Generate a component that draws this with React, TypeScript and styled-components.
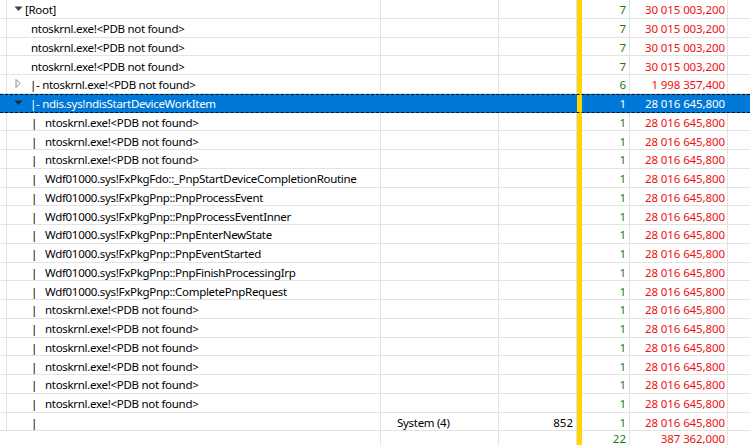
import React from 'react';
import styled, { createGlobalStyle, css } from 'styled-components';

const GlobalStyle = createGlobalStyle`
  html, body {
    margin: 0;
    padding: 0;
    background: #fff;
    overflow: hidden;
  }
  body {
    font-family: 'Noto Sans', 'Open Sans', sans-serif;
    font-size: 11.5px;
    color: #000;
  }
`;

const ROW_H = 18.75;
const COLS = '7px 374px 118px 78px 5px 48px 98px 1fr';
const GRID = '#e3e3e3';

type Expander = 'open' | 'closed' | undefined;

interface RowData {
  indent: number;
  expander?: Expander;
  pipe?: boolean;
  text: string;
  process?: string;
  pid?: string;
  count: string;
  weight: string;
  selected?: boolean;
}

const NT = 'ntoskrnl.exe!<PDB not found>';
const W = '28 016 645,800';

const rows: RowData[] = [
  { indent: 0, expander: 'open', text: '[Root]', count: '7', weight: '30 015 003,200' },
  { indent: 6, text: NT, count: '7', weight: '30 015 003,200' },
  { indent: 6, text: NT, count: '7', weight: '30 015 003,200' },
  { indent: 6, text: NT, count: '7', weight: '30 015 003,200' },
  { indent: 5, expander: 'closed', text: '|- ' + NT, count: '6', weight: '1 998 357,400' },
  { indent: 5, expander: 'open', text: '|- ndis.sys!ndisStartDeviceWorkItem', count: '1', weight: W, selected: true },
  { indent: 6, pipe: true, text: NT, count: '1', weight: W },
  { indent: 6, pipe: true, text: NT, count: '1', weight: W },
  { indent: 6, pipe: true, text: NT, count: '1', weight: W },
  { indent: 6, pipe: true, text: 'Wdf01000.sys!FxPkgFdo::_PnpStartDeviceCompletionRoutine', count: '1', weight: W },
  { indent: 6, pipe: true, text: 'Wdf01000.sys!FxPkgPnp::PnpProcessEvent', count: '1', weight: W },
  { indent: 6, pipe: true, text: 'Wdf01000.sys!FxPkgPnp::PnpProcessEventInner', count: '1', weight: W },
  { indent: 6, pipe: true, text: 'Wdf01000.sys!FxPkgPnp::PnpEnterNewState', count: '1', weight: W },
  { indent: 6, pipe: true, text: 'Wdf01000.sys!FxPkgPnp::PnpEventStarted', count: '1', weight: W },
  { indent: 6, pipe: true, text: 'Wdf01000.sys!FxPkgPnp::PnpFinishProcessingIrp', count: '1', weight: W },
  { indent: 6, pipe: true, text: 'Wdf01000.sys!FxPkgPnp::CompletePnpRequest', count: '1', weight: W },
  { indent: 6, pipe: true, text: NT, count: '1', weight: W },
  { indent: 6, pipe: true, text: NT, count: '1', weight: W },
  { indent: 6, pipe: true, text: NT, count: '1', weight: W },
  { indent: 6, pipe: true, text: NT, count: '1', weight: W },
  { indent: 6, pipe: true, text: NT, count: '1', weight: W },
  { indent: 6, pipe: true, text: NT, count: '1', weight: W },
  { indent: 6, pipe: true, text: '', process: 'System (4)', pid: '852', count: '1', weight: W },
];

const Table = styled.div`
  width: 750px;
  height: 445px;
  overflow: hidden;
`;

const Row = styled.div<{ $selected?: boolean; $height?: number }>`
  display: grid;
  grid-template-columns: ${COLS};
  height: ${({ $height }) => $height ?? ROW_H}px;
  position: relative;
  ${({ $selected }) =>
    $selected &&
    css`
      background: #0078d7;
      color: #fff;
      &::before,
      &::after {
        content: '';
        position: absolute;
        left: 0;
        right: 0;
        border-top: 1px dashed #111;
        z-index: 2;
      }
      &::before { top: 0; }
      &::after { bottom: 0; }
    `}
`;

const Cell = styled.div<{ $align?: 'left' | 'right'; $selected?: boolean; $last?: boolean; $noLine?: boolean; $pad?: number }>`
  display: flex;
  align-items: center;
  justify-content: ${({ $align }) => ($align === 'right' ? 'flex-end' : 'flex-start')};
  padding: ${({ $last }) => ($last ? '0' : '2px')} ${({ $align, $pad }) => ($align === 'right' ? `${$pad ?? 3}px` : '0')} 0
    ${({ $align, $pad }) => ($align === 'right' ? '0' : `${$pad ?? 0}px`)};
  white-space: nowrap;
  overflow: hidden;
  box-sizing: border-box;
  min-height: 0;
  border-right: 1px solid ${({ $selected, $noLine }) => ($selected || $noLine ? 'transparent' : GRID)};
  border-bottom: 1px solid ${({ $selected, $last }) => ($selected || $last ? 'transparent' : GRID)};
`;

const YellowBar = styled.div`
  background: #ffd400;
`;

const TreeIndent = styled.span<{ $w: number }>`
  display: inline-block;
  flex: 0 0 ${({ $w }) => $w}px;
`;

const ExpanderBox = styled.span`
  display: inline-flex;
  align-items: center;
  justify-content: center;
  flex: 0 0 14px;
  margin-top: -2px;
`;

const Pipe = styled.span`
  display: inline-block;
  flex: 0 0 14px;
`;

const Label = styled.span`
  letter-spacing: -0.3px;
`;

const Count = styled.span<{ $selected?: boolean }>`
  color: ${({ $selected }) => ($selected ? '#fff' : '#1a7a1a')};
`;

const Weight = styled.span<{ $selected?: boolean }>`
  color: ${({ $selected }) => ($selected ? '#fff' : '#f01010')};
  letter-spacing: -0.1px;
`;

const Arrow: React.FC<{ kind: Expander; selected?: boolean }> = ({ kind, selected }) => {
  if (kind === 'open') {
    return (
      <svg width="9" height="6" viewBox="0 0 9 6">
        <path d="M0.5 0.5 L8.5 0.5 L4.5 5 Z" fill={selected ? '#1c2a3a' : '#404040'} />
      </svg>
    );
  }
  return (
    <svg width="6" height="9" viewBox="0 0 6 9">
      <path d="M1 0.5 L5 4.5 L1 8.5 Z" fill="#fff" stroke="#8a8a8a" strokeWidth="1" />
    </svg>
  );
};

const DataRow: React.FC<{ r: RowData }> = ({ r }) => {
  const sel = r.selected;
  return (
    <Row $selected={sel}>
      <Cell $selected={sel} />
      <Cell $selected={sel} $pad={4}>
        <ExpanderBox>{r.expander && <Arrow kind={r.expander} selected={sel} />}</ExpanderBox>
        <TreeIndent $w={r.indent} />
        {r.pipe && <Pipe>|</Pipe>}
        <Label>{r.text}</Label>
      </Cell>
      <Cell $selected={sel} $pad={16}>
        <Label>{r.process}</Label>
      </Cell>
      <Cell $selected={sel} $align="right" $pad={3}>{r.pid}</Cell>
      <YellowBar />
      <Cell $selected={sel} $align="right" $pad={3}>
        <Count $selected={sel}>{r.count}</Count>
      </Cell>
      <Cell $selected={sel} $align="right" $pad={2}>
        <Weight $selected={sel}>{r.weight}</Weight>
      </Cell>
      <Cell $selected={sel} $noLine />
    </Row>
  );
};

export default function App() {
  return (
    <>
      <GlobalStyle />
      <Table>
        {rows.map((r, i) => (
          <DataRow key={i} r={r} />
        ))}
        <Row $height={14.5}>
          <Cell $last $noLine />
          <Cell $last />
          <Cell $last />
          <Cell $last />
          <YellowBar />
          <Cell $last $align="right" $pad={3}>
            <Count>22</Count>
          </Cell>
          <Cell $last $align="right" $pad={2}>
            <Weight>387 362,000</Weight>
          </Cell>
          <Cell $last $noLine />
        </Row>
      </Table>
    </>
  );
}
